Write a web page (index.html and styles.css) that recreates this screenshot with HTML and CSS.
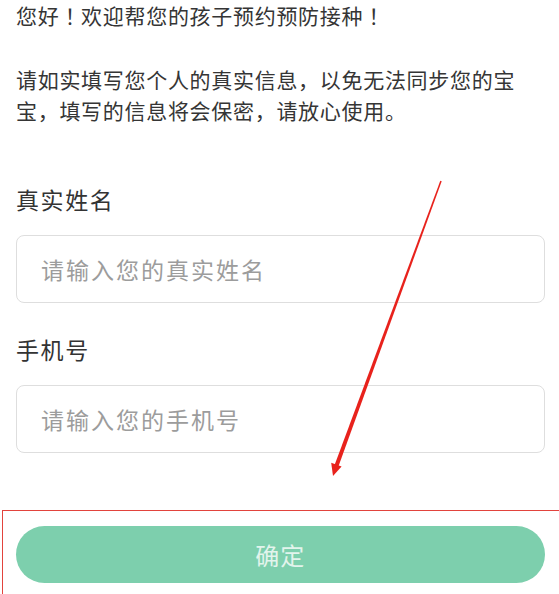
FILE: index.html
```html
<!DOCTYPE html>
<html lang="zh-CN">
<head>
<meta charset="utf-8">
<title>预约预防接种</title>
<link rel="stylesheet" href="styles.css">
</head>
<body>
<main class="page">
  <p class="greeting">您好<span class="punct" lang="zh-TW">！</span>欢迎帮您的孩子预约预防接种<span class="punct" lang="zh-TW">！</span></p>
  <p class="notice">请如实填写您个人的真实信息，以免无法同步您的宝宝，填写的信息将会保密，请放心使用。</p>

  <form class="form">
    <div class="field">
      <label class="field-label" for="name">真实姓名</label>
      <input class="field-input" id="name" type="text" placeholder="请输入您的真实姓名">
    </div>
    <div class="field">
      <label class="field-label" for="phone">手机号</label>
      <input class="field-input" id="phone" type="tel" placeholder="请输入您的手机号">
    </div>
    <div class="confirm-zone">
      <button class="confirm-btn" type="button">确定</button>
    </div>
  </form>

  <svg class="annotation-arrow" width="559" height="594" viewBox="0 0 559 594" aria-hidden="true">
    <polygon fill="#e8221c" points="441.7,181.2 440.3,180.8 334.6,465 338.4,466.4"/>
    <polygon fill="#e8221c" points="333,476 331.2,462.8 341.6,466.6"/>
  </svg>
</main>
</body>
</html>
```

FILE: styles.css
```css
html, body {
  margin: 0;
  padding: 0;
  background: #ffffff;
}

body {
  font-family: "Noto Sans CJK SC", "Noto Sans", sans-serif;
  color: #353535;
  overflow: hidden;
}

.page {
  position: relative;
  padding: 0 14px 0 16px;
  height: 594px;
  box-sizing: border-box;
}

.greeting,
.notice {
  margin: 0;
  font-size: 21px;
  line-height: 31px;
  letter-spacing: 0.7px;
}

.punct {
  font-family: "Noto Sans CJK TC", "Noto Sans CJK SC", sans-serif;
}

.notice {
  margin-top: 33px;
  padding-right: 20px;
}

.form {
  margin-top: 57px;
  display: flex;
  flex-direction: column;
}

.field {
  display: flex;
  flex-direction: column;
}

.field + .field {
  margin-top: 30px;
}

.field-label {
  font-size: 23px;
  line-height: 32px;
  letter-spacing: 1.6px;
  color: #333333;
  margin-bottom: 20px;
}

.field-input {
  box-sizing: border-box;
  height: 68px;
  width: 100%;
  border: 1.5px solid #dedede;
  border-radius: 8px;
  padding: 0 24px;
  font-family: "Noto Sans CJK SC", "Noto Sans", sans-serif;
  font-size: 23px;
  letter-spacing: 2px;
  color: #333333;
  background: #ffffff;
  outline: none;
}

.field-input::placeholder {
  color: #9c9c9c;
}

.confirm-zone {
  margin: 57px -14px 0 -14px;
  border-top: 1.5px solid #e2433d;
  border-left: 1.5px solid #e2433d;
  padding: 15px 14px 30px 12.5px;
}

.confirm-btn {
  display: block;
  width: 100%;
  height: 57px;
  border: none;
  border-radius: 29px;
  background: #7dcfad;
  color: #e2f4ec;
  font-family: "Noto Sans CJK SC", "Noto Sans", sans-serif;
  font-size: 24px;
  letter-spacing: 1px;
  cursor: pointer;
}

.annotation-arrow {
  position: absolute;
  left: 0;
  top: 0;
  pointer-events: none;
}
```
